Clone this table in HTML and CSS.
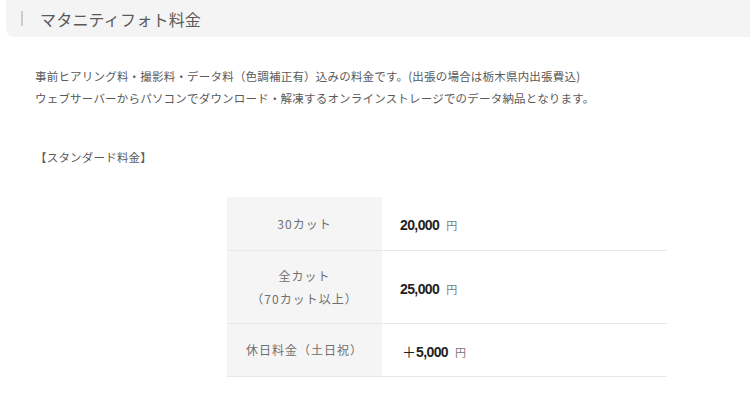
FILE: index.html
```html
<!DOCTYPE html>
<html lang="ja">
<head>
<meta charset="utf-8">
<title>マタニティフォト料金</title>
<link rel="stylesheet" href="styles.css">
</head>
<body>
<main class="page">
  <h2 class="section-title"><span class="section-title__bar"></span>マタニティフォト料金</h2>

  <p class="lead">事前ヒアリング料・撮影料・データ料（色調補正有）込みの料金です。(出張の場合は栃木県内出張費込)<br>ウェブサーバーからパソコンでダウンロード・解凍するオンラインストレージでのデータ納品となります。</p>

  <p class="plan-label">【スタンダード料金】</p>

  <table class="price-table">
    <tr class="price-row price-row--single">
      <th class="price-name">30カット</th>
      <td class="price-value"><span class="amount">20,000</span><span class="yen">円</span></td>
    </tr>
    <tr class="price-row price-row--double">
      <th class="price-name">全カット<br>（70カット以上）</th>
      <td class="price-value"><span class="amount">25,000</span><span class="yen">円</span></td>
    </tr>
    <tr class="price-row price-row--single">
      <th class="price-name">休日料金（土日祝）</th>
      <td class="price-value"><span class="amount"><span class="plus">＋</span>5,000</span><span class="yen">円</span></td>
    </tr>
  </table>
</main>
</body>
</html>
```
FILE: styles.css
```css
html, body {
  margin: 0;
  padding: 0;
  background: #ffffff;
}

body {
  font-family: "Noto Sans CJK JP", "Noto Sans", sans-serif;
  color: #555555;
}

.page {
  padding: 0 0 0 6px;
}

/* page heading with a thin vertical accent */
.section-title {
  display: flex;
  align-items: center;
  height: 37px;
  margin: 0;
  padding-left: 15px;
  background: #f4f4f4;
  border-radius: 0 0 0 8px;
  font-size: 16px;
  font-weight: 400;
  color: #5a5a5a;
  letter-spacing: 0.2px;
}

.section-title__bar {
  width: 2px;
  height: 15px;
  background: #cccccc;
  margin-right: 17px;
}

.lead {
  margin: 28px 0 0 29px;
  font-size: 11.5px;
  line-height: 22px;
  letter-spacing: 0.2px;
  color: #5a5a5a;
}

.plan-label {
  margin: 37px 0 0 29px;
  font-size: 11.5px;
  line-height: 22px;
  letter-spacing: 0.2px;
  color: #5a5a5a;
}

.price-table {
  margin: 29px 0 0 221px;
  width: 440px;
  border-collapse: collapse;
}

.price-row {
  border-bottom: 1px solid #e8e8e8;
}

.price-row--single {
  height: 53px;
}

.price-row--double {
  height: 73px;
}

.price-name {
  width: 155px;
  padding: 0;
  background: #f5f5f5;
  font-size: 12px;
  font-weight: 400;
  line-height: 23px;
  letter-spacing: 1px;
  color: #707070;
  text-align: center;
  vertical-align: middle;
}

.price-value {
  padding: 0 0 0 18px;
  vertical-align: middle;
  text-align: left;
}

.amount {
  font-family: "Liberation Sans", Arial, sans-serif;
  font-size: 14px;
  font-weight: 700;
  letter-spacing: -0.6px;
  color: #222222;
}

.plus {
  font-family: "Noto Sans CJK JP", sans-serif;
  font-weight: 400;
  letter-spacing: 0;
  margin-left: 2px;
}

.yen {
  margin-left: 7px;
  font-size: 11px;
  color: #777777;
}
```
